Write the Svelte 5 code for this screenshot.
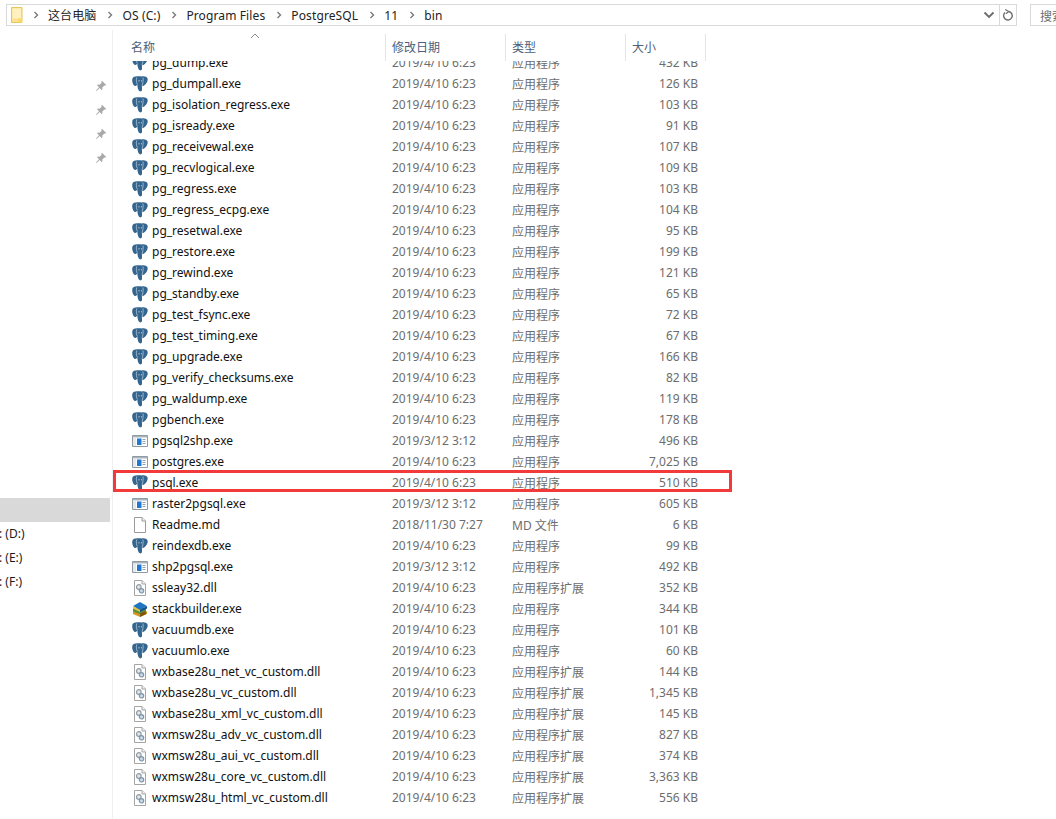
<script>
  const d = '2019/4/10 6:23';
  const d2 = '2019/3/12 3:12';
  const app = '应用程序';
  const ext = '应用程序扩展';

  const files = [
    ['pg_dump.exe', 'pg', d, app, '432 KB'],
    ['pg_dumpall.exe', 'pg', d, app, '126 KB'],
    ['pg_isolation_regress.exe', 'pg', d, app, '103 KB'],
    ['pg_isready.exe', 'pg', d, app, '91 KB'],
    ['pg_receivewal.exe', 'pg', d, app, '107 KB'],
    ['pg_recvlogical.exe', 'pg', d, app, '109 KB'],
    ['pg_regress.exe', 'pg', d, app, '103 KB'],
    ['pg_regress_ecpg.exe', 'pg', d, app, '104 KB'],
    ['pg_resetwal.exe', 'pg', d, app, '95 KB'],
    ['pg_restore.exe', 'pg', d, app, '199 KB'],
    ['pg_rewind.exe', 'pg', d, app, '121 KB'],
    ['pg_standby.exe', 'pg', d, app, '65 KB'],
    ['pg_test_fsync.exe', 'pg', d, app, '72 KB'],
    ['pg_test_timing.exe', 'pg', d, app, '67 KB'],
    ['pg_upgrade.exe', 'pg', d, app, '166 KB'],
    ['pg_verify_checksums.exe', 'pg', d, app, '82 KB'],
    ['pg_waldump.exe', 'pg', d, app, '119 KB'],
    ['pgbench.exe', 'pg', d, app, '178 KB'],
    ['pgsql2shp.exe', 'win', d2, app, '496 KB'],
    ['postgres.exe', 'win', d, app, '7,025 KB'],
    ['psql.exe', 'pg', d, app, '510 KB'],
    ['raster2pgsql.exe', 'win', d2, app, '605 KB'],
    ['Readme.md', 'doc', '2018/11/30 7:27', 'MD 文件', '6 KB'],
    ['reindexdb.exe', 'pg', d, app, '99 KB'],
    ['shp2pgsql.exe', 'win', d2, app, '492 KB'],
    ['ssleay32.dll', 'dll', d, ext, '352 KB'],
    ['stackbuilder.exe', 'stack', d, app, '344 KB'],
    ['vacuumdb.exe', 'pg', d, app, '101 KB'],
    ['vacuumlo.exe', 'pg', d, app, '60 KB'],
    ['wxbase28u_net_vc_custom.dll', 'dll', d, ext, '144 KB'],
    ['wxbase28u_vc_custom.dll', 'dll', d, ext, '1,345 KB'],
    ['wxbase28u_xml_vc_custom.dll', 'dll', d, ext, '145 KB'],
    ['wxmsw28u_adv_vc_custom.dll', 'dll', d, ext, '827 KB'],
    ['wxmsw28u_aui_vc_custom.dll', 'dll', d, ext, '374 KB'],
    ['wxmsw28u_core_vc_custom.dll', 'dll', d, ext, '3,363 KB'],
    ['wxmsw28u_html_vc_custom.dll', 'dll', d, ext, '556 KB']
  ];

  const crumbs = ['这台电脑', 'OS (C:)', 'Program Files', 'PostgreSQL', '11', 'bin'];
</script>

<div class="window">
  <div class="topbar">
    <div class="address">
      <svg class="folder" width="14" height="18" viewBox="0 0 14 18">
        <path d="M1.500 1.500h10.500v15H1.500z" fill="#ffe28f" stroke="#e6c658"/>
        <path d="M2.500 2.500h8.500v10H2.500z" fill="#fff1c2"/>
        <path d="M8 12.500h4v4H8z" fill="#fbd86f"/>
      </svg>
      {#each crumbs as c}
        <svg class="chev" width="6" height="8" viewBox="0 0 6 8"><path d="M1.500 1l3 3-3 3" fill="none" stroke="#7a7a7a" stroke-width="1.400"/></svg>
        <span class="crumb">{c}</span>
      {/each}
      <span class="spring"></span>
      <svg class="down" width="12" height="8" viewBox="0 0 12 8"><path d="M1.500 1.500L6 6l4.500-4.500" fill="none" stroke="#6b6b6b" stroke-width="1.800"/></svg>
      <span class="refresh">
        <svg width="12" height="13" viewBox="0 0 12 13"><path d="M7 2.500A4.300 4.300 0 1 1 3 3.500" fill="none" stroke="#6e6e6e" stroke-width="1.400"/><path d="M3.200 .5L6.800 2.600 3.800 4.800" fill="none" stroke="#6e6e6e" stroke-width="1.200"/></svg>
      </span>
    </div>
    <div class="search">搜索"bin"</div>
  </div>

  <div class="main">
    <aside class="nav">
      <div class="pins">
        {#each [0, 1, 2, 3] as p}
          <div class="pin">
            <svg width="12" height="12" viewBox="0 0 12 12"><path d="M7 .8l4.200 4.200-1 .8-.9-.3-2 2 .2 1.800-.8.8-2-2L1.500 11 1 10.500l3-3.200-2-2 .8-.8 1.800.2 2-2-.3-.9z" fill="#a9a9a9"/></svg>
          </div>
        {/each}
      </div>
      <div class="navitem selected"></div>
      <div class="navitem">: (D:)</div>
      <div class="navitem">: (E:)</div>
      <div class="navitem">: (F:)</div>
    </aside>

    <section class="files">
      <div class="head">
        <div class="hcol name">名称<svg class="sort" width="10" height="6" viewBox="0 0 10 6"><path d="M1 5l4-4 4 4" fill="none" stroke="#8a8a8a"/></svg></div>
        <div class="hcol date">修改日期</div>
        <div class="hcol type">类型</div>
        <div class="hcol size">大小</div>
      </div>
      <div class="rows">
        <div class="scroll">
          {#each files as f}
            <div class="row">
              <span class="fname">
                <span class="ico">
                  {#if f[1] === 'pg'}
                    <svg width="16" height="16" viewBox="0 0 16 16">
                      <path d="M3.500.5C1.500.5 0 2 .2 4.500.4 7.500 1.800 10 3.300 10c1 0 1.500-.8 2-1.700.1 2.200.6 4.700 1.500 6.300.8 1.300 3.200 1 3.200-.9V10.300c2.400-.2 5.200-3.300 5.700-6.300C16 1.800 14.400.5 12.600.5c-1-.3-2-.3-3 .1C8 .1 5.800.1 3.500.5z" fill="#33658f"/>
                      <path d="M4.800 1.500C3.800 4 4.500 6.500 5.300 8.300M11 1.500c.5 2.500-.2 5.800-1 8.800" fill="none" stroke="#dfe9f1" stroke-width=".6"/>
                      <path d="M6.500 4.800h1M9 4.800h.8" stroke="#e8eff5" stroke-width="1"/>
                    </svg>
                  {:else if f[1] === 'win'}
                    <svg width="16" height="14" viewBox="0 0 16 14">
                      <path d="M.5 1.500h15v11H.5z" fill="#fff" stroke="#8f9aa3"/>
                      <path d="M1 2h14v1.500H1z" fill="#aab4bc"/>
                      <path d="M1 3.500h3v8.500H1z" fill="#e6e9ec"/>
                      <path d="M5 4.500h4.500v6.500H5z" fill="#1f78d1"/>
                      <path d="M10.500 5.500h3M10.500 7.500h3M10.500 9.500h3" stroke="#8fa1b0"/>
                    </svg>
                  {:else if f[1] === 'doc'}
                    <svg width="16" height="16" viewBox="0 0 16 16">
                      <path d="M2.500.5h7.500l3.500 3.500v11.500h-11z" fill="#fff" stroke="#9a9a9a"/>
                      <path d="M10 .5V4h3.500" fill="#f2f2f2" stroke="#9a9a9a"/>
                    </svg>
                  {:else if f[1] === 'dll'}
                    <svg width="16" height="16" viewBox="0 0 16 16">
                      <path d="M2.500.5h7.500l3.500 3.500v11.500h-11z" fill="#fff" stroke="#a5a5a5"/>
                      <path d="M10 .5V4h3.500" fill="#efefef" stroke="#a5a5a5"/>
                      <circle cx="6.800" cy="7" r="2.300" fill="#e2e7ea" stroke="#8f9ba5" stroke-width="1.200"/>
                      <circle cx="9.500" cy="10.800" r="2.200" fill="#c9d9e6" stroke="#7f96a8" stroke-width="1.200"/>
                    </svg>
                  {:else}
                    <svg width="16" height="16" viewBox="0 0 16 16">
                      <path d="M1 10.500L8 8l7 2.500V13l-7 3-7-3z" fill="#d39a1f"/>
                      <path d="M1 7.500L8 5l6 2.500V10l-6 3-7-2.500z" fill="#5d8f35"/>
                      <path d="M8 12.500v3.500l6-3-.5-3z" fill="#7d5510"/>
                      <path d="M1 5L8 1l7 4-7 4z" fill="#1f74c4"/>
                      <path d="M1 5v2.500l7 3.500v-2z" fill="#e7c44a"/>
                      <path d="M8 9v2l7-3.500V5z" fill="#0f4f92"/>
                    </svg>
                  {/if}
                </span>
                {f[0]}
              </span>
              <span class="fdate">{f[2]}</span>
              <span class="ftype">{f[3]}</span>
              <span class="fsize">{f[4]}</span>
            </div>
          {/each}
        </div>
      </div>
      <div class="mark"></div>
    </section>
  </div>
</div>

<style>
  :global(body) {
    margin: 0;
    background: #fff;
  }

  .window {
    width: 1056px;
    height: 819px;
    overflow: hidden;
    font-family: "Noto Sans", "Noto Sans CJK SC", sans-serif;
    font-size: 12px;
    color: #1a1a1a;
    background: #fff;
  }

  .topbar {
    display: flex;
    gap: 13px;
    padding: 4px 0 0 6px;
    height: 30px;
    box-sizing: border-box;
  }

  .address {
    display: flex;
    align-items: center;
    width: 1011px;
    height: 22px;
    flex: none;
    box-sizing: border-box;
    border: 1px solid #d9d9d9;
    padding-left: 3px;
  }

  .folder { margin-right: 9px; }
  .chev { margin-right: 9px; }

  .crumb {
    margin-right: 11px;
    letter-spacing: .12px;
    color: #222;
  }

  .spring { flex: 1; }

  .down { margin-right: 4px; }

  .refresh {
    width: 16px;
    height: 20px;
    border-left: 1px solid #d9d9d9;
    display: flex;
    align-items: center;
    justify-content: center;
  }

  .search {
    flex: none;
    width: 60px;
    height: 22px;
    box-sizing: border-box;
    border: 1px solid #d9d9d9;
    padding: 2px 0 0 9px;
    color: #6d6d6d;
    white-space: nowrap;
  }

  .main { display: flex; }

  .nav {
    width: 113px;
    flex: none;
    height: 789px;
    box-sizing: border-box;
    border-right: 1px solid #f0f0f0;
    padding-top: 44px;
  }

  .pin {
    height: 24px;
    display: flex;
    align-items: center;
    justify-content: flex-end;
    padding-right: 5px;
  }

  .navitem {
    height: 24px;
    width: 110px;
    line-height: 24px;
    color: #1a1a1a;
    text-indent: -1px;
  }

  .pins { margin-bottom: 328px; }

  .selected { background: #d9d9d9; }

  .files {
    position: relative;
    flex: 1;
  }

  .head {
    display: flex;
    height: 27px;
    margin-top: 4px;
    color: #4c607a;
    line-height: 27px;
  }

  .hcol {
    box-sizing: border-box;
    border-right: 1px solid #e5e5e5;
    padding-left: 6px;
    position: relative;
  }

  .name { width: 273px; padding-left: 18px; }
  .date { width: 120px; }
  .type { width: 120px; }
  .size { width: 80px; }

  .sort {
    position: absolute;
    left: 137px;
    top: -1px;
  }

  .rows {
    height: 758px;
    overflow: hidden;
  }

  .scroll { margin-top: -9px; }

  .row {
    display: flex;
    align-items: center;
    height: 21px;
    white-space: nowrap;
  }

  .fname {
    display: flex;
    align-items: center;
    gap: 4px;
    width: 273px;
    padding-left: 19px;
    box-sizing: border-box;
    color: #111;
  }

  .ico {
    width: 16px;
    height: 17px;
    display: flex;
    align-items: center;
  }

  .fdate, .ftype, .fsize { color: #6d6d6d; }

  .fdate { width: 120px; padding-left: 6px; box-sizing: border-box; }
  .ftype { width: 120px; padding-left: 6px; box-sizing: border-box; }
  .fsize { width: 72px; text-align: right; }

  /* red annotation around psql.exe */
  .mark {
    position: absolute;
    left: 0;
    top: 440px;
    width: 619px;
    height: 22px;
    box-sizing: border-box;
    border: 3px solid #f23a3a;
  }
</style>
